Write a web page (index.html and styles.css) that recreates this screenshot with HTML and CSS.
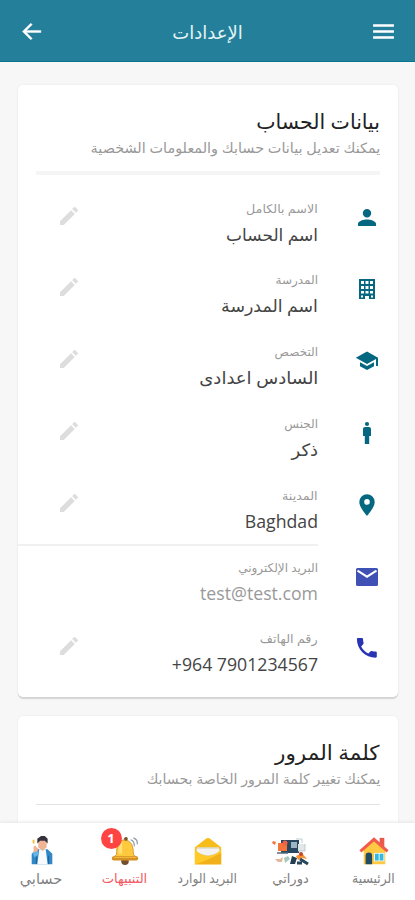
FILE: index.html
```html
<!DOCTYPE html>
<html lang="ar" dir="rtl">
<head>
<meta charset="utf-8">
<meta name="viewport" content="width=device-width, initial-scale=1">
<title>الإعدادات</title>
<link rel="stylesheet" href="styles.css">
</head>
<body>
<svg class="defs" width="0" height="0">
  <symbol id="pencil" viewBox="0 0 24 24"><path d="M3 17.25V21h3.75L17.8 9.94l-3.75-3.75zM20.7 7.04a1 1 0 0 0 0-1.41l-2.34-2.34a1 1 0 0 0-1.41 0l-1.83 1.83 3.75 3.75z"/></symbol>
</svg>
<header class="topbar">
  <svg class="bar-icon" viewBox="0 0 24 24"><path d="M2 5h20v2.500H2zM2 10.800h20v2.500H2zM2 16.500h20V19H2z"/></svg>
  <h1 class="topbar-title"><span class="fit t-settings">الإعدادات</span></h1>
  <svg class="bar-icon" viewBox="0 0 24 24"><path d="M21 11H7.100l5.600-5.600L11.300 4 3.300 12l8 8 1.400-1.400L7.100 13H21z" stroke="#fff" stroke-width=".4"/></svg>
</header>
<main class="page">
  <section class="card account">
    <h2 class="card-title"><span class="fit t-account">بيانات الحساب</span></h2>
    <p class="card-sub"><span class="fit t-account-sub">يمكنك تعديل بيانات حسابك والمعلومات الشخصية</span></p>
    <hr class="rule thick">
    <div class="list">
      <div class="row">
        <svg class="row-icon" viewBox="0 0 24 24"><path d="M12 11.500a4.200 4.200 0 1 0 0-8.400 4.200 4.200 0 0 0 0 8.400zm0 2c-3 0-9 1.400-9 4.300V20h18v-2.200c0-2.900-6-4.300-9-4.300z"/></svg>
        <div class="field"><div class="label"><span class="fit l-name">الاسم بالكامل</span></div><div class="value"><span class="fit v-name">اسم الحساب</span></div></div>
        <svg class="edit"><use href="#pencil"/></svg>
      </div>
      <div class="row">
        <svg class="row-icon" viewBox="0 0 24 24"><path fill-rule="evenodd" d="M4 2h16v20h-6v-3h-4v3H4zM6 4v3h3V4zm4.500 0v3h3V4zM15 4v3h3V4zM6 9v3h3V9zm4.500 0v3h3V9zM15 9v3h3V9zM6 14v2.500h3V14zm4.500 0v2.500h3V14zm4.500 0v2.500h3V14zM6 18.500V20.500h2v-2zm10 0v2h2v-2z"/></svg>
        <div class="field"><div class="label"><span class="fit l-school">المدرسة</span></div><div class="value"><span class="fit v-school">اسم المدرسة</span></div></div>
        <svg class="edit"><use href="#pencil"/></svg>
      </div>
      <div class="row">
        <svg class="row-icon" viewBox="0 0 24 24"><path d="M5 13.200v4L12 21l7-3.800v-4L12 17zM12 2.500.800 8.800 12 15l9-4.900V17h2V8.800z"/></svg>
        <div class="field"><div class="label"><span class="fit l-major">التخصص</span></div><div class="value"><span class="fit v-major">السادس اعدادى</span></div></div>
        <svg class="edit"><use href="#pencil"/></svg>
      </div>
      <div class="row">
        <svg class="row-icon" viewBox="0 0 24 24"><circle cx="12" cy="3" r="2.100"/><path d="M10 6h4a2 2 0 0 1 2 2v7h-1.800v8H9.800v-8H8V8a2 2 0 0 1 2-2z"/></svg>
        <div class="field"><div class="label"><span class="fit l-gender">الجنس</span></div><div class="value"><span class="fit v-gender">ذكر</span></div></div>
        <svg class="edit"><use href="#pencil"/></svg>
      </div>
      <div class="row divided">
        <svg class="row-icon" viewBox="0 0 24 24"><path fill-rule="evenodd" d="M12 1.200a7.700 7.700 0 0 0-7.700 7.700C4.300 14.600 12 22.800 12 22.800s7.700-8.200 7.700-13.900A7.700 7.700 0 0 0 12 1.200zm0 10.500a2.800 2.800 0 1 1 0-5.600 2.800 2.800 0 0 1 0 5.600z"/></svg>
        <div class="field"><div class="label"><span class="fit l-city">المدينة</span></div><div class="value latin"><span class="fit">Baghdad</span></div></div>
        <svg class="edit"><use href="#pencil"/></svg>
      </div>
      <div class="row blue locked">
        <svg class="row-icon" viewBox="0 0 24 24"><path fill="#3f51b5" d="M2.500 3h19A1.500 1.500 0 0 1 23 4.500v15a1.500 1.500 0 0 1-1.500 1.500h-19A1.500 1.500 0 0 1 1 19.500v-15A1.500 1.500 0 0 1 2.500 3z"/><path fill="none" stroke="#fff" stroke-width="2" d="m2.500 5.700 9.500 6 9.500-6"/></svg>
        <div class="field"><div class="label"><span class="fit l-mail">البريد الإلكتروني</span></div><div class="value latin"><span class="fit">test@test.com</span></div></div>
      </div>
      <div class="row blue">
        <svg class="row-icon" viewBox="0 0 24 24"><path d="M6.200 10.500c1.500 3 4 5.500 7.100 7.100l2.400-2.400c.3-.3.700-.4 1.100-.2 1.200.4 2.500.6 3.900.6.600 0 1.100.5 1.100 1.100v3.900c0 .6-.5 1.100-1.100 1.100C10.300 21.700 1.900 13.300 1.900 3c0-.6.500-1.100 1.100-1.100h3.900C7.500 1.900 8 2.400 8 3c0 1.400.2 2.700.6 3.900.1.400 0 .8-.3 1.100z"/></svg>
        <div class="field"><div class="label"><span class="fit l-phone">رقم الهاتف</span></div><div class="value latin"><span class="fit" dir="ltr">+964 7901234567</span></div></div>
        <svg class="edit"><use href="#pencil"/></svg>
      </div>
    </div>
  </section>
  <section class="card password">
    <h2 class="card-title"><span class="fit t-pass">كلمة المرور</span></h2>
    <p class="card-sub"><span class="fit t-pass-sub">يمكنك تغيير كلمة المرور الخاصة بحسابك</span></p>
    <hr class="rule">
  </section>
</main>
<nav class="tabs">
  <a class="tab">
    <svg class="tab-icon" viewBox="0 0 32 32"><path fill="#ffc943" d="M5 14 16 4l12 10v16H5z"/><path fill="#e95849" d="M22 2h5v9h-5z"/><path fill="none" stroke="#f15b4c" stroke-width="3.200" d="M1.500 16.500 16 3.500l14.500 13"/><path fill="#234b62" d="M7 30V21a3.500 3.500 0 0 1 7 0v9z"/><path fill="#eafaff" d="M16 18h11v9H16z"/><path fill="#35b8dc" d="M17 19h4v7h-4zm5 0h4v7h-4z"/></svg>
    <span class="tab-label"><span class="fit n-home">الرئيسية</span></span>
  </a>
  <a class="tab">
    <svg class="tab-icon wide" viewBox="0 0 38 30"><path fill="#29475f" d="M9 4h18v13H9z"/><path fill="#9cb7c3" d="M19 6h6v6h-6z"/><path fill="#e1e7e9" d="M26 8h7v7h-7z"/><path fill="none" stroke="#bccbd0" d="M24 3h6v4M26 15h7V8"/><path fill="#f4743b" d="M6 7h9v8H6zM1 5l3 1-1 3-3-2z"/><circle cx="13" cy="7" r="2.500" fill="#ef6045"/><path stroke="#53697a" stroke-width="1.500" d="M5 17h11"/><path fill="#e6b59c" d="M3 23h5l3-2-1 5H6z"/><path fill="#a7c9bb" d="m12 22 4-2 2 3-5 4z"/><path fill="#233f52" d="m20 20 5 2-2 6h-5z"/><path fill="#f79332" d="m24 20 6-3 5 6-5-1-4 2z"/><path stroke="#28465c" stroke-width="3" d="m28 23 8 5M25 27h5"/><circle cx="29" cy="18" r="2" fill="#bd4931"/></svg>
    <span class="tab-label"><span class="fit n-courses">دوراتي</span></span>
  </a>
  <a class="tab">
    <svg class="tab-icon" viewBox="0 0 32 32"><path fill="#f7bd1c" d="M2 12 14.500 2.500q1.500-1 3 0L30 12v18H2z"/><path fill="#dcdcd2" d="M4 12h24v4q-4 4.500-12 5.500Q8 20.500 4 16z"/><path fill="#f3f4f1" d="M4 13.500h24v3q-4 3-12 4-8-1-12-4z"/><path fill="#ffc928" d="M2 14q5 7 14 7t14-7v16H2z"/><path fill="#f1b01a" d="M2 30q9-2 28-12v12z"/></svg>
    <span class="tab-label"><span class="fit n-inbox">البريد الوارد</span></span>
  </a>
  <a class="tab active">
    <span class="bell"><svg class="tab-icon" viewBox="0 0 32 32"><circle cx="16" cy="27" r="4" fill="#75502c"/><path fill="#ffc93e" stroke="#c98924" stroke-width=".8" d="M15 4c-7 1-8 7-8 16l-4 3h26l-4-3c0-10-2-15-10-16z"/><path fill="#ffe17a" d="M13 6c-3 2-4 6-4 13h4z"/><rect x="2" y="21.500" width="28" height="4.500" rx="2" fill="#d59023"/><path stroke="#f3bc42" d="M4 23h24"/><circle cx="17" cy="3" r="2" fill="#795227"/><path fill="none" stroke="#8795a2" stroke-width="1.200" d="M22 4q4 1 4 7M25 2q5 2 4 7"/></svg><b class="badge">1</b></span>
    <span class="tab-label"><span class="fit n-alerts">التنبيهات</span></span>
  </a>
  <a class="tab">
    <svg class="tab-icon" viewBox="0 0 32 32"><path fill="#3287c5" d="M5 30V19l5-5h12l5 5v11z"/><path fill="#f7fbfd" d="M13 14h7l2 16H11z"/><path fill="#f1b493" d="M12 4h9v8l-4.500 4-4.500-4z"/><path fill="#35323c" d="M11 8V3l4-3h4l3 3v5l-3-3h-5z"/><path fill="#f1b493" d="m7 11 2-1 1 2 2 1-1 4-4 1z"/><path fill="#62b5e8" d="m6 18 6-2v4l-4 3z"/><path fill="#f4bd3a" d="M6 4h2v4H6z"/><path stroke="#1c5e99" d="M10 22v8m13-9v9"/></svg>
    <span class="tab-label"><span class="fit n-me">حسابي</span></span>
  </a>
</nav>
</body>
</html>
```
FILE: styles.css
```css
* { box-sizing: border-box; }
body {
  margin: 0;
  height: 900px;
  display: flex;
  flex-direction: column;
  overflow: hidden;
  background: #f7f7f7;
  font-family: "Open Sans", "DejaVu Sans", sans-serif;
  color: #333;
}
.defs { display: none; }
h1, h2, p { margin: 0; font-weight: 400; }
.fit { display: inline-block; white-space: nowrap; transform-origin: right center; }
.topbar {
  flex: none;
  height: 62px;
  padding: 2px 19px 0;
  display: flex;
  align-items: center;
  justify-content: space-between;
  background: #24809a;
  border-bottom: 1px solid #08768e;
}
.topbar-title { font-size: 18px; line-height: 30px; color: #e4f4f7; }
.bar-icon { width: 25px; height: 25px; fill: #fff; }
.page { flex: 1; min-height: 0; overflow: hidden; padding: 23px 17px 0 18px; }
.card { background: #fff; border-radius: 5px; box-shadow: 0 0 2px #e4e4e4; padding: 21px 18px 0; }
.account { height: 612px; box-shadow: 0 2px 1px #d5d5d5, 0 0 2px #e4e4e4; }
.password { margin-top: 19px; height: 200px; }
.card-title { font-size: 20.500px; line-height: 30px; color: #222; }
.card-sub { font-size: 14px; line-height: 24px; color: #999; }
.rule { border: 0; height: 1px; margin: 13px 0 0; background: #e3e3e3; }
.rule.thick { height: 4px; margin-top: 11px; background: #f5f5f5; }
.list { margin: 11.7px -18px 0; }
.row { height: 71.8px; display: flex; padding: 0 19px 0 39px; }
.row-icon { width: 24px; height: 24px; margin-top: 19px; fill: #066880; }
.blue .row-icon { fill: #2834b4; }
.field { flex: 1; margin-right: 37px; padding-top: 11px; }
.label { font-size: 12px; line-height: 22px; color: #999; }
.value { font-size: 17px; line-height: 30px; color: #444; }
.value.latin { font-size: 17.700px; line-height: 28px; }
.locked .value { color: #999; }
.edit { width: 24px; height: 24px; margin-top: 17px; fill: #ddd; }
.divided { position: relative; }
.divided::after { content: ""; position: absolute; left: 0; right: 80px; bottom: 0; height: 2px; background: #f0f0f0; }

.t-account-sub { transform: scaleX(1.03); }
.t-pass { transform: scaleX(1.05); }
.t-pass-sub { transform: scaleX(1.01); }
.l-name, .l-city, .l-phone { transform: scaleX(1.06); }
.v-school { transform: scaleX(1.02); }
.v-major, .v-gender { transform: scaleX(1.06); }

.tabs {
  flex: none;
  height: 77px;
  display: grid;
  grid-template-columns: repeat(5, 1fr);
  background: #fff;
  box-shadow: 0 -1px 3px #e6e6e6;
}
.tab { display: flex; flex-direction: column; align-items: center; padding-top: 13px; }
.tab-icon { display: block; width: 30px; height: 30px; }
.tab-icon.wide { width: 38px; }
.tab-label { font-size: 13px; line-height: 24px; color: #808080; }
.active .tab-label { color: #f45a5f; }
.tab-label .fit { transform-origin: center; }
.n-home, .n-inbox { transform: scaleX(.95); }
.n-me { transform: scale(1.12); }
.bell { position: relative; }
.badge {
  position: absolute;
  left: -9px;
  top: -8px;
  width: 21px;
  height: 21px;
  border-radius: 50%;
  background: #ff4444;
  color: #fff;
  font-size: 13px;
  line-height: 21px;
  text-align: center;
}
```
